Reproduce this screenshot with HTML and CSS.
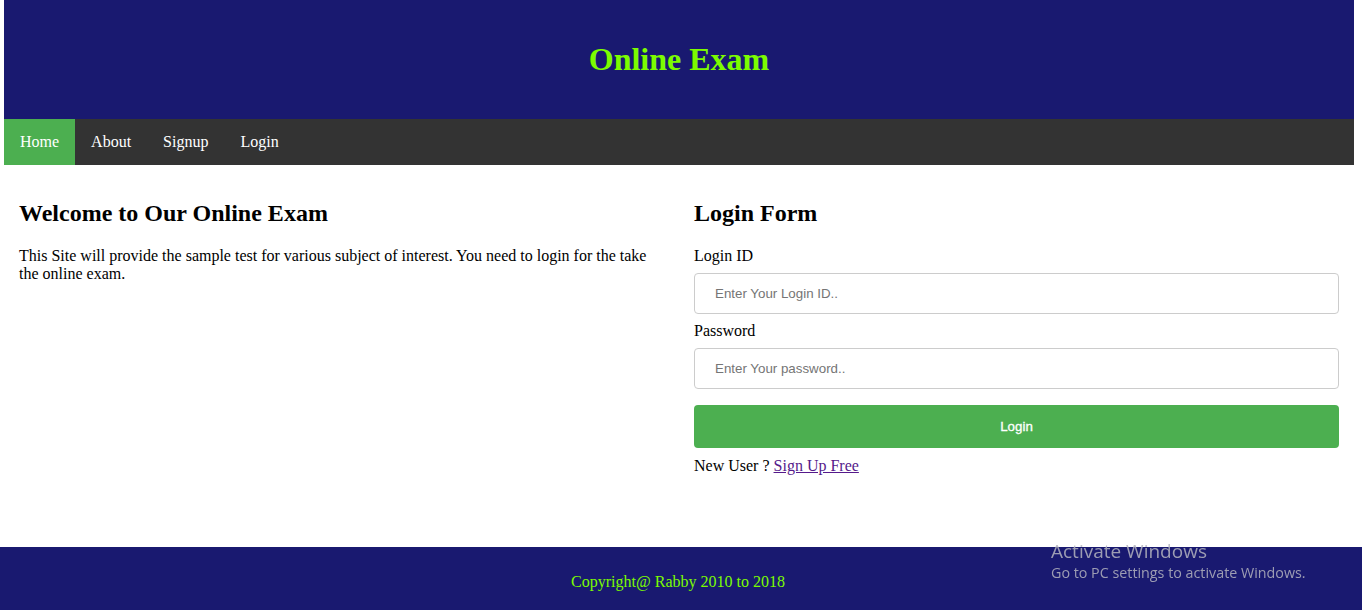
FILE: index.html
```html
<!DOCTYPE html>
<html lang="en">
<head>
<meta charset="utf-8">
<title>Online Exam</title>
<link rel="stylesheet" href="styles.css">
</head>
<body>
<div class="page">
  <header class="header">
    <h1 class="title">Online Exam</h1>
  </header>
  <nav class="nav">
    <a class="nav-item active" href="#">Home</a>
    <a class="nav-item" href="#">About</a>
    <a class="nav-item" href="#">Signup</a>
    <a class="nav-item" href="#">Login</a>
  </nav>
  <main class="content">
    <section class="col">
      <h2 class="heading">Welcome to Our Online Exam</h2>
      <p class="text">This Site will provide the sample test for various subject of interest. You need to login for the take the online exam.</p>
    </section>
    <section class="col">
      <h2 class="heading">Login Form</h2>
      <form class="form">
        <label class="label" for="lid">Login ID</label>
        <input class="field" id="lid" type="text" placeholder="Enter Your Login ID..">
        <label class="label" for="pwd">Password</label>
        <input class="field" id="pwd" type="password" placeholder="Enter Your password..">
        <button class="btn" type="button">Login</button>
        <p class="signup">New User ? <a class="signup-link" href="#">Sign Up Free</a></p>
      </form>
    </section>
  </main>
</div>
<footer class="footer">
  <p class="copy">Copyright@ Rabby 2010 to 2018</p>
</footer>
<div class="watermark">
  <div class="wm-title">Activate Windows</div>
  <div class="wm-sub">Go to PC settings to activate Windows.</div>
</div>
</body>
</html>
```

FILE: styles.css
```css
* { box-sizing: border-box; }

html, body {
  margin: 0;
  padding: 0;
  background: #ffffff;
}

body {
  font-family: "Liberation Serif", "Times New Roman", serif;
  font-size: 16px;
  color: #000;
}

.page {
  margin: 0 8px 0 4px;
}

.header {
  background: #191970;
  height: 119px;
  display: flex;
  align-items: center;
  justify-content: center;
}

.title {
  margin: 0;
  font-size: 32px;
  font-weight: bold;
  color: #7CFC00;
}

.nav {
  background: #333333;
  display: flex;
  height: 46px;
}

.nav-item {
  display: block;
  color: #ffffff;
  text-decoration: none;
  padding: 14px 16px;
  line-height: 18px;
  font-size: 16px;
}

.nav-item.active {
  background: #4CAF50;
}

.content {
  display: grid;
  grid-template-columns: 1fr 1fr;
}

.col {
  padding: 15px;
}

.heading {
  font-size: 24px;
  font-weight: bold;
  margin: 20px 0 20px;
  line-height: 27px;
}

.text {
  margin: 0;
  line-height: 18.4px;
}

.form {
  margin: 0;
}

.label {
  display: block;
  line-height: 18px;
}

.field {
  display: block;
  width: 100%;
  height: 41px;
  margin: 8px 0;
  padding: 12px 20px;
  border: 1px solid #cccccc;
  border-radius: 4px;
  font-family: "Liberation Sans", Arial, sans-serif;
  font-size: 13.33px;
  color: #000;
  background: #fff;
}

.field::placeholder {
  color: #757575;
}

.btn {
  display: block;
  width: 100%;
  height: 43px;
  margin: 16px 0 9px;
  border: none;
  border-radius: 4px;
  background: #4CAF50;
  color: #ffffff;
  font-family: "Liberation Sans", Arial, sans-serif;
  font-size: 13.33px;
  font-weight: normal;
  -webkit-text-stroke: 0.3px #ffffff;
}

.signup {
  margin: 0;
  line-height: 18.4px;
}

.signup-link {
  color: #551A8B;
}

.footer {
  position: fixed;
  left: 0;
  right: 0;
  bottom: 0;
  height: 63px;
  background: #191970;
  display: flex;
  align-items: center;
  justify-content: center;
  padding: 6px 6px 0 0;
}

.copy {
  margin: 0;
  color: #7CFC00;
  font-size: 16px;
}

.watermark {
  position: fixed;
  left: 1051px;
  top: 540px;
  font-family: "Open Sans", "Noto Sans", sans-serif;
  color: rgba(180, 180, 190, 0.85);
  pointer-events: none;
}

.wm-title {
  font-size: 19px;
  line-height: 22px;
}

.wm-sub {
  font-size: 14.3px;
  line-height: 22px;
}
```
